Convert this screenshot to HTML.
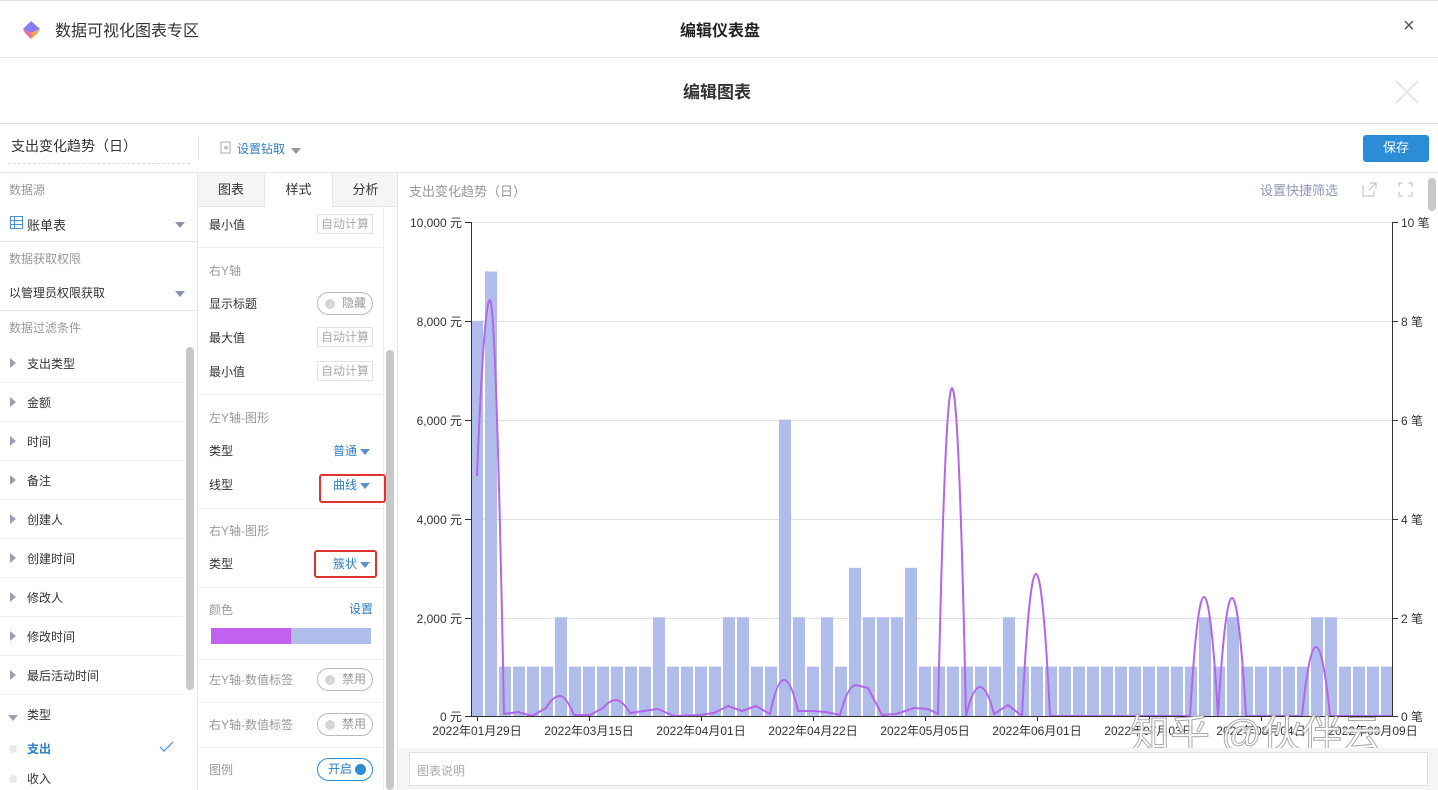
<!DOCTYPE html>
<html><head><meta charset="utf-8"><style>
*{margin:0;padding:0;box-sizing:border-box}
body{width:1438px;height:790px;overflow:hidden;background:#fff;font-family:"Liberation Sans","Noto Sans CJK SC",sans-serif;color:#333;position:relative;font-size:12px}
.a{position:absolute;white-space:nowrap}
.hl{position:absolute;height:1px;background:#e8e8e8}
.vl{position:absolute;width:1px;background:#e6e6e6}
.g{color:#999}
.lab{font-size:12px;color:#333}
.inp{position:absolute;border:1px solid #e3e3e3;color:#aaa;font-size:12px;padding:2px 3px;height:20px;line-height:14px}
.tg{position:absolute;border:1px solid #bbb;border-radius:12px;height:23px;width:56px;font-size:12px;color:#999;line-height:21px;padding-left:24px}
.tg:before{content:"";position:absolute;left:7px;top:6px;width:10px;height:10px;border-radius:50%;background:#d6d6d6}
.blue{color:#2d7fc6}
.tri{display:inline-block;width:0;height:0;border-left:5px solid transparent;border-right:5px solid transparent;border-top:6px solid #8a90a8;vertical-align:middle}
.rt{display:inline-block;width:0;height:0;border-top:5px solid transparent;border-bottom:5px solid transparent;border-left:6px solid #9aa0b0}
</style></head><body>
<div class="hl" style="left:0;top:0;width:1438px;background:#e3e3e3"></div>
<svg class="a" style="left:21px;top:20px" width="22" height="20" viewBox="0 0 22 20"><path d="M10 1 L19 9 L10 13 L2 9Z" fill="#8a7cf0"/><path d="M2 9 L10 13 L10 19 L4 13Z" fill="#f06f8f"/><path d="M10 13 L19 9 L16 14 L10 19Z" fill="#f7a24a"/></svg>
<div class="a" style="left:55px;top:17px;font-size:16px;color:#333">数据可视化图表专区</div>
<div class="a" style="left:680px;top:17px;font-size:16px;font-weight:bold;color:#222">编辑仪表盘</div>
<div class="a" style="left:1403px;top:15px;font-size:20px;color:#555">×</div>
<div class="hl" style="left:0;top:57px;width:1438px;background:#ececec"></div>
<div class="a" style="left:683px;top:78px;font-size:17px;font-weight:bold;color:#333">编辑图表</div>
<svg class="a" style="left:1395px;top:80px" width="24" height="24"><path d="M1 1L23 23M23 1L1 23" stroke="#e6e6e6" stroke-width="2"/></svg>
<div class="hl" style="left:0;top:123px;width:1438px;background:#dcdcdc"></div>
<div class="a" style="left:11px;top:136px;font-size:14px;color:#333">支出变化趋势（日）</div>
<div class="a" style="left:8px;top:163px;width:182px;border-top:1px dashed #ddd"></div>
<div class="vl" style="left:198px;top:137px;height:22px"></div>
<svg class="a" style="left:220px;top:141px" width="13" height="13"><rect x="1" y="1" width="9" height="11" fill="none" stroke="#aaa"/><path d="M4 6l2 2 2-2M6 4v4" stroke="#aaa" fill="none"/></svg>
<div class="a blue" style="left:237px;top:140px;font-size:12px">设置钻取</div>
<div class="a" style="left:291px;top:143px"><span class="tri" style="border-top-color:#999"></span></div>
<div class="a" style="left:1363px;top:135px;width:66px;height:27px;background:#2d8cd6;color:#fff;border-radius:3px;font-size:13px;text-align:center;line-height:26px">保存</div>
<div class="hl" style="left:0;top:172px;width:1438px;background:#e6e6e6"></div>
<div class="vl" style="left:197px;top:172px;height:618px"></div>
<div class="a g" style="left:9px;top:181px">数据源</div>
<svg class="a" style="left:10px;top:216px" width="13" height="13"><rect x=".5" y=".5" width="12" height="12" fill="none" stroke="#4a90d9"/><path d="M1 4.5h11M1 8.5h11M4.5 1v11" stroke="#4a90d9"/></svg>
<div class="a lab" style="left:27px;top:215px;font-size:13px">账单表</div>
<div class="a" style="left:175px;top:217px"><span class="tri"></span></div>
<div class="hl" style="left:0;top:241px;width:197px"></div>
<div class="a g" style="left:9px;top:250px">数据获取权限</div>
<div class="a lab" style="left:9px;top:284px">以管理员权限获取</div>
<div class="a" style="left:175px;top:286px"><span class="tri"></span></div>
<div class="hl" style="left:0;top:310px;width:197px"></div>
<div class="a g" style="left:9px;top:319px">数据过滤条件</div>
<div class="a" style="left:186px;top:347px;width:8px;height:343px;background:#c8c8c8;border-radius:4px"></div>
<div class="a" style="left:0;top:344px;width:183px">
<div style="position:relative;height:39px;border-bottom:1px solid #eee"><span class="rt" style="position:absolute;left:10px;top:14px"></span><span style="position:absolute;left:27px;top:11px">支出类型</span></div>
<div style="position:relative;height:39px;border-bottom:1px solid #eee"><span class="rt" style="position:absolute;left:10px;top:14px"></span><span style="position:absolute;left:27px;top:11px">金额</span></div>
<div style="position:relative;height:39px;border-bottom:1px solid #eee"><span class="rt" style="position:absolute;left:10px;top:14px"></span><span style="position:absolute;left:27px;top:11px">时间</span></div>
<div style="position:relative;height:39px;border-bottom:1px solid #eee"><span class="rt" style="position:absolute;left:10px;top:14px"></span><span style="position:absolute;left:27px;top:11px">备注</span></div>
<div style="position:relative;height:39px;border-bottom:1px solid #eee"><span class="rt" style="position:absolute;left:10px;top:14px"></span><span style="position:absolute;left:27px;top:11px">创建人</span></div>
<div style="position:relative;height:39px;border-bottom:1px solid #eee"><span class="rt" style="position:absolute;left:10px;top:14px"></span><span style="position:absolute;left:27px;top:11px">创建时间</span></div>
<div style="position:relative;height:39px;border-bottom:1px solid #eee"><span class="rt" style="position:absolute;left:10px;top:14px"></span><span style="position:absolute;left:27px;top:11px">修改人</span></div>
<div style="position:relative;height:39px;border-bottom:1px solid #eee"><span class="rt" style="position:absolute;left:10px;top:14px"></span><span style="position:absolute;left:27px;top:11px">修改时间</span></div>
<div style="position:relative;height:39px;border-bottom:1px solid #eee"><span class="rt" style="position:absolute;left:10px;top:14px"></span><span style="position:absolute;left:27px;top:11px">最后活动时间</span></div>
</div>
<div class="a" style="left:8px;top:710px"><span class="tri" style="border-top-color:#9aa0b0"></span></div>
<div class="a lab" style="left:27px;top:706px">类型</div>
<div class="a" style="left:9px;top:745px;width:8px;height:8px;border-radius:50%;background:#e8e8ec"></div>
<div class="a blue" style="left:27px;top:740px;font-weight:bold">支出</div>
<svg class="a" style="left:159px;top:741px" width="15" height="12"><path d="M1 6l4 4 9-9" stroke="#3a8ee0" fill="none" stroke-width="1.2"/></svg>
<div class="a" style="left:9px;top:775px;width:8px;height:8px;border-radius:50%;background:#e8e8ec"></div>
<div class="a lab" style="left:27px;top:770px">收入</div>
<div class="a" style="left:198px;top:173px;width:67px;height:34px;background:#f5f5f5;border-bottom:1px solid #e6e6e6;border-right:1px solid #e6e6e6;text-align:center;line-height:33px;font-size:13px">图表</div>
<div class="a" style="left:265px;top:173px;width:67px;height:34px;text-align:center;line-height:33px;font-size:13px">样式</div>
<div class="a" style="left:332px;top:173px;width:66px;height:34px;background:#f5f5f5;border-bottom:1px solid #e6e6e6;border-left:1px solid #e6e6e6;text-align:center;line-height:33px;font-size:13px">分析</div>
<div class="vl" style="left:383px;top:207px;height:583px;background:#eee"></div>
<div class="vl" style="left:397px;top:172px;height:618px"></div>
<div class="a" style="left:386px;top:350px;width:8px;height:440px;background:#c8c8c8;border-radius:4px"></div>
<div class="a lab" style="left:209px;top:216px">最小值</div><div class="inp" style="left:317px;top:214px;width:56px">自动计算</div>
<div class="hl" style="left:198px;top:247px;width:185px;background:#eee"></div>
<div class="a g" style="left:209px;top:262px">右Y轴</div>
<div class="a lab" style="left:209px;top:295px">显示标题</div><div class="tg" style="left:317px;top:292px">隐藏</div>
<div class="a lab" style="left:209px;top:329px">最大值</div><div class="inp" style="left:317px;top:327px;width:56px">自动计算</div>
<div class="a lab" style="left:209px;top:363px">最小值</div><div class="inp" style="left:317px;top:361px;width:56px">自动计算</div>
<div class="hl" style="left:198px;top:394px;width:185px;background:#eee"></div>
<div class="a g" style="left:209px;top:409px">左Y轴-图形</div>
<div class="a lab" style="left:209px;top:442px">类型</div>
<div class="a blue" style="left:333px;top:442px">普通 <span class="tri" style="border-top-color:#5a8fd0"></span></div>
<div class="a lab" style="left:209px;top:476px">线型</div>
<div class="a" style="left:319px;top:474px;width:67px;height:29px;border:2px solid #e0332f;border-radius:3px"></div>
<div class="a blue" style="left:333px;top:476px">曲线 <span class="tri" style="border-top-color:#5a8fd0"></span></div>
<div class="hl" style="left:198px;top:508px;width:185px;background:#eee"></div>
<div class="a g" style="left:209px;top:522px">右Y轴-图形</div>
<div class="a lab" style="left:209px;top:555px">类型</div>
<div class="a" style="left:314px;top:550px;width:63px;height:28px;border:2px solid #e0332f;border-radius:3px"></div>
<div class="a blue" style="left:333px;top:555px">簇状 <span class="tri" style="border-top-color:#5a8fd0"></span></div>
<div class="hl" style="left:198px;top:587px;width:185px;background:#eee"></div>
<div class="a g" style="left:209px;top:601px">颜色</div>
<div class="a blue" style="left:349px;top:600px">设置</div>
<div class="a" style="left:211px;top:628px;width:80px;height:16px;background:#c061f0"></div>
<div class="a" style="left:291px;top:628px;width:80px;height:16px;background:#b0bdeb"></div>
<div class="hl" style="left:198px;top:659px;width:185px;background:#eee"></div>
<div class="a g" style="left:209px;top:671px">左Y轴-数值标签</div><div class="tg" style="left:317px;top:668px">禁用</div>
<div class="hl" style="left:198px;top:702px;width:185px;background:#eee"></div>
<div class="a g" style="left:209px;top:716px">右Y轴-数值标签</div><div class="tg" style="left:317px;top:713px">禁用</div>
<div class="hl" style="left:198px;top:747px;width:185px;background:#eee"></div>
<div class="a g" style="left:209px;top:761px">图例</div>
<div class="a" style="left:317px;top:758px;width:56px;height:23px;border:1px solid #2d8cd6;border-radius:12px;color:#2d7fc6;line-height:21px;padding-left:10px">开启<span style="position:absolute;right:6px;top:5px;width:11px;height:11px;border-radius:50%;background:#2d8cd6"></span></div>
<div class="a" style="left:409px;top:181px;font-size:13px;color:#999">支出变化趋势（日）</div>
<div class="a" style="left:1260px;top:180px;font-size:13px;color:#8f96b8">设置快捷筛选</div>
<svg class="a" style="left:1362px;top:182px" width="15" height="15"><path d="M1 3v11h11V9M8 1h6v6M14 1L7 8" stroke="#bbb" fill="none"/></svg>
<svg class="a" style="left:1398px;top:182px" width="15" height="15"><path d="M1 5V1h4M10 1h4v4M14 10v4h-4M5 14H1v-4" stroke="#bbb" fill="none"/></svg>
<div class="a" style="left:1428px;top:178px;width:8px;height:33px;background:#c8c8c8;border-radius:4px"></div>
<svg class="a" style="left:398px;top:210px" width="1040" height="538" viewBox="398 210 1040 538" font-family="Liberation Sans, Noto Sans CJK SC, sans-serif" font-size="12" fill="#333">
<g stroke="#e0e0e0"><path d="M471 222.5H1393M471 321.5H1393M471 420.5H1393M471 519.5H1393M471 618.5H1393"/></g>
<g fill="#b0bdeb">
<rect x="471" y="320.8" width="12" height="395.2"/><rect x="485" y="271.4" width="12" height="444.6"/>
<rect x="499" y="666.6" width="12" height="49.4"/><rect x="513" y="666.6" width="12" height="49.4"/><rect x="527" y="666.6" width="12" height="49.4"/><rect x="541" y="666.6" width="12" height="49.4"/>
<rect x="555" y="617.2" width="12" height="98.8"/>
<rect x="569" y="666.6" width="12" height="49.4"/><rect x="583" y="666.6" width="12" height="49.4"/><rect x="597" y="666.6" width="12" height="49.4"/><rect x="611" y="666.6" width="12" height="49.4"/><rect x="625" y="666.6" width="12" height="49.4"/><rect x="639" y="666.6" width="12" height="49.4"/>
<rect x="653" y="617.2" width="12" height="98.8"/>
<rect x="667" y="666.6" width="12" height="49.4"/><rect x="681" y="666.6" width="12" height="49.4"/><rect x="695" y="666.6" width="12" height="49.4"/><rect x="709" y="666.6" width="12" height="49.4"/>
<rect x="723" y="617.2" width="12" height="98.8"/><rect x="737" y="617.2" width="12" height="98.8"/>
<rect x="751" y="666.6" width="12" height="49.4"/><rect x="765" y="666.6" width="12" height="49.4"/>
<rect x="779" y="419.6" width="12" height="296.4"/>
<rect x="793" y="617.2" width="12" height="98.8"/><rect x="807" y="666.6" width="12" height="49.4"/><rect x="821" y="617.2" width="12" height="98.8"/><rect x="835" y="666.6" width="12" height="49.4"/>
<rect x="849" y="567.8" width="12" height="148.2"/>
<rect x="863" y="617.2" width="12" height="98.8"/><rect x="877" y="617.2" width="12" height="98.8"/><rect x="891" y="617.2" width="12" height="98.8"/>
<rect x="905" y="567.8" width="12" height="148.2"/>
<rect x="919" y="666.6" width="12" height="49.4"/><rect x="933" y="666.6" width="12" height="49.4"/><rect x="947" y="666.6" width="12" height="49.4"/><rect x="961" y="666.6" width="12" height="49.4"/><rect x="975" y="666.6" width="12" height="49.4"/><rect x="989" y="666.6" width="12" height="49.4"/>
<rect x="1003" y="617.2" width="12" height="98.8"/>
<rect x="1017" y="666.6" width="12" height="49.4"/><rect x="1031" y="666.6" width="12" height="49.4"/><rect x="1045" y="666.6" width="12" height="49.4"/><rect x="1059" y="666.6" width="12" height="49.4"/><rect x="1073" y="666.6" width="12" height="49.4"/><rect x="1087" y="666.6" width="12" height="49.4"/><rect x="1101" y="666.6" width="12" height="49.4"/><rect x="1115" y="666.6" width="12" height="49.4"/><rect x="1129" y="666.6" width="12" height="49.4"/><rect x="1143" y="666.6" width="12" height="49.4"/><rect x="1157" y="666.6" width="12" height="49.4"/><rect x="1171" y="666.6" width="12" height="49.4"/><rect x="1185" y="666.6" width="12" height="49.4"/>
<rect x="1199" y="617.2" width="12" height="98.8"/><rect x="1213" y="666.6" width="12" height="49.4"/><rect x="1227" y="617.2" width="12" height="98.8"/>
<rect x="1241" y="666.6" width="12" height="49.4"/><rect x="1255" y="666.6" width="12" height="49.4"/><rect x="1269" y="666.6" width="12" height="49.4"/><rect x="1283" y="666.6" width="12" height="49.4"/><rect x="1297" y="666.6" width="12" height="49.4"/>
<rect x="1311" y="617.2" width="12" height="98.8"/><rect x="1325" y="617.2" width="12" height="98.8"/>
<rect x="1339" y="666.6" width="12" height="49.4"/><rect x="1353" y="666.6" width="12" height="49.4"/><rect x="1367" y="666.6" width="12" height="49.4"/><rect x="1381" y="666.6" width="12" height="49.4"/>
</g>
<path d="M477 476 Q484 300 490 300 Q496 300 504 714 L518 712 L532 716 L546 708 Q553 696 560 696 Q566 696 574 715 L590 715 L603 708 Q610 700 616 700 Q622 700 630 713 L658 709 L674 716 L700 715 L714 713 L728 706 L742 711 L756 706 L770 714 Q777 680 784 680 Q791 680 798 711 L812 711 L826 712 L840 715 Q848 685 856 685 L868 688 L882 715 L896 714 L914 708 L928 709 L938 714 Q945 388 952 388 Q959 388 966 716 Q973 687 980 687 Q987 687 994 714 L1008 705 L1022 716 Q1029 574 1036 574 Q1043 574 1050 716 L1190 716 Q1197 597 1204 597 Q1211 597 1218 716 Q1225 598 1232 598 Q1239 598 1246 716 L1302 716 Q1309 647 1316 647 Q1323 647 1330 716 L1392 716" stroke="#b466e8" stroke-width="2" fill="none" stroke-linejoin="round"/>
<g stroke="#333"><path d="M471.5 222V716M1392.5 222V716M465 222.5h6M465 321.5h6M465 420.5h6M465 519.5h6M465 618.5h6M465 716.5h6M1393 222.5h5M1393 321.5h5M1393 420.5h5M1393 519.5h5M1393 618.5h5M1393 716.5h5M471 716.5H1393M477.5 716v5M589.5 716v5M701.5 716v5M813.5 716v5M925.5 716v5M1037.5 716v5M1149.5 716v5M1261.5 716v5M1373.5 716v5"/></g>
<g text-anchor="end"><text x="462" y="227">10,000 元</text><text x="462" y="326">8,000 元</text><text x="462" y="425">6,000 元</text><text x="462" y="524">4,000 元</text><text x="462" y="623">2,000 元</text><text x="462" y="721">0 元</text></g>
<g><text x="1401" y="227">10 笔</text><text x="1401" y="326">8 笔</text><text x="1401" y="425">6 笔</text><text x="1401" y="524">4 笔</text><text x="1401" y="623">2 笔</text><text x="1401" y="721">0 笔</text></g>
<g text-anchor="middle"><text x="477" y="735">2022年01月29日</text><text x="589" y="735">2022年03月15日</text><text x="701" y="735">2022年04月01日</text><text x="813" y="735">2022年04月22日</text><text x="925" y="735">2022年05月05日</text><text x="1037" y="735">2022年06月01日</text><text x="1149" y="735">2022年07月03日</text><text x="1261" y="735">2022年08月04日</text><text x="1373" y="735">2022年09月09日</text></g>
<text x="1130" y="748" font-size="40" fill="rgba(255,255,255,0.85)" stroke="#aaa" stroke-width="1">知乎 @伙伴云</text>
</svg>
<div class="a" style="left:398px;top:748px;width:1040px;height:42px;background:#f5f5f5"></div>
<div class="a" style="left:409px;top:752px;width:1019px;height:34px;background:#fff;border:1px solid #e0e0e0;color:#aaa;padding:9px 7px;font-size:12px">图表说明</div>
</body></html>
